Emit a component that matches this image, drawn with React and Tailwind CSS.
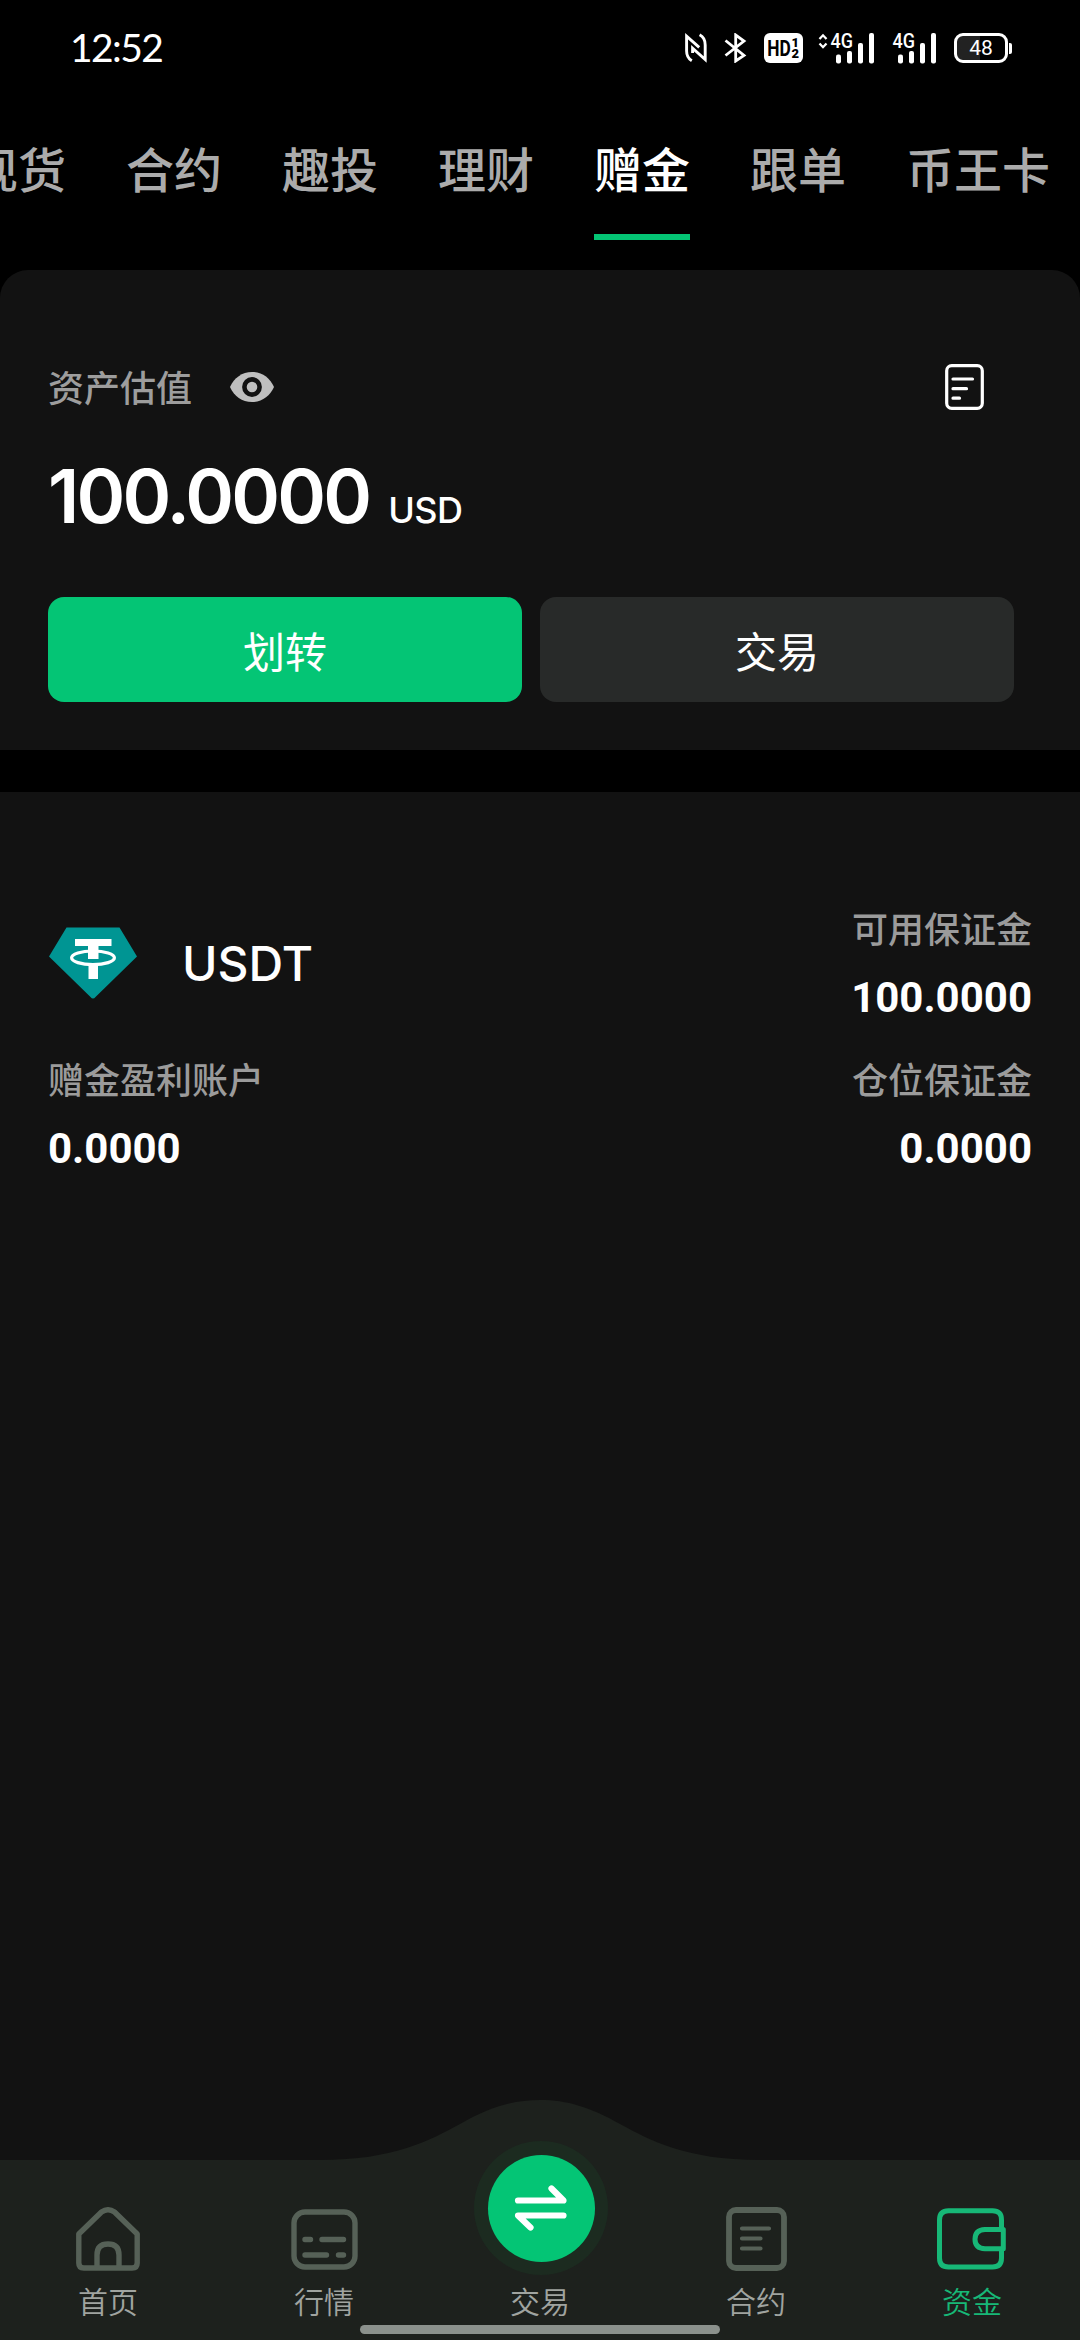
const CJK = "font-['Noto_Sans_CJK_SC',sans-serif]";

const tabs = ["现货", "合约", "趣投", "理财", "赠金", "跟单", "币王卡"];

function NfcIcon() {
  return (
    <svg width="22" height="30" viewBox="0 0 22 30" fill="none" stroke="#fff" strokeWidth="2.9">
      <path d="M6.8 27.8C3 25.5 1.6 22.5 1.6 18V3.2L14.2 14.4" />
      <path d="M14.6 1.8C18.8 4 20.2 7 20.2 12V26.6L7.6 15.2V20" />
    </svg>
  );
}

function BluetoothIcon() {
  return (
    <svg width="23" height="30" viewBox="0 0 23 30" fill="none" stroke="#fff" strokeWidth="2.8">
      <path d="M1.5 7.5L20 22.3L11.7 28V2L20 8L1.5 22.5" />
    </svg>
  );
}

function HdBadge() {
  return (
    <div className="flex h-[30px] w-[39px] items-center justify-center rounded-[6px] bg-white text-black">
      <svg width="39" height="30" viewBox="0 0 39 30" fill="#000" fontFamily="Roboto, sans-serif">
        <text x="3.2" y="23" fontSize="22.5" fontWeight="700" textLength="23.5" lengthAdjust="spacingAndGlyphs">HD</text>
        <text x="27.6" y="14" fontSize="13" fontWeight="900">1</text>
        <text x="27.6" y="25" fontSize="13" fontWeight="900">2</text>
      </svg>
    </div>
  );
}

function Signal({ arrows }) {
  return (
    <svg width="57" height="43" viewBox="0 -6 57 43" fill="#fff">
      {arrows && (
        <path d="M1.5 6L5 2.3L8.5 6M1.5 10.5L5 14.2L8.5 10.5" fill="none" stroke="#fff" strokeWidth="2.3" />
      )}
      <text x="12.5" y="14.7" fontFamily="Roboto, sans-serif" fontSize="19.5" fontWeight="500" textLength="22.5" lengthAdjust="spacingAndGlyphs">
        4G
      </text>
      <rect x="18" y="21.5" width="5" height="9" rx="2" />
      <rect x="29" y="18" width="5" height="12.5" rx="2" />
      <rect x="40" y="10" width="5" height="20.5" rx="2" />
      <rect x="51" y="0" width="5" height="30.5" rx="2" />
    </svg>
  );
}

function Battery() {
  return (
    <div className="flex items-center gap-px">
      <div className="flex h-[30px] w-[54px] items-center justify-center rounded-[9px] border-[3px] border-white bg-linear-to-r from-[#222] from-48% to-black to-48% font-['Roboto',sans-serif] text-[21px] leading-[24px] text-white">
        48
      </div>
      <div className="h-[11px] w-[3px] rounded-r-[2px] bg-white" />
    </div>
  );
}

function StatusBar() {
  return (
    <div className="flex h-24 items-center pr-[68px] pl-[70px]">
      <span className="-mt-[3px] font-['Lato',sans-serif] text-[39px] leading-[48px] tracking-[-1.6px] text-white">12:52</span>
      <div className="ml-auto flex items-center">
        <NfcIcon />
        <div className="ml-[17px]"><BluetoothIcon /></div>
        <div className="ml-[17px]"><HdBadge /></div>
        <div className="ml-[15px]"><Signal arrows /></div>
        <div className="ml-[5px]"><Signal /></div>
        <div className="ml-[17px]"><Battery /></div>
      </div>
    </div>
  );
}

function Tabs() {
  return (
    <div className="flex h-[174px] gap-[60px] overflow-hidden text-[48px] font-medium whitespace-nowrap">
      {tabs.map((t, i) => (
        <div
          key={t}
          className={
            (i === 0 ? "-ml-[30px] " : "") +
            "flex h-[144px] shrink-0 flex-col justify-between border-b-[6px] pt-[47px] leading-[48px] " +
            (t === "赠金" ? "border-[#04c575] text-white" : "border-transparent text-[#ababab]")
          }
        >
          {t}
        </div>
      ))}
    </div>
  );
}

function EyeIcon() {
  return (
    <svg width="44" height="30" viewBox="0 0 44 30">
      <path d="M22 0C32 0 40 6 44 15C40 24 32 30 22 30S4 24 0 15C4 6 12 0 22 0Z" fill="#bfbfbf" />
      <circle cx="22" cy="15" r="7.6" fill="#bfbfbf" stroke="#121212" strokeWidth="4.6" />
    </svg>
  );
}

function RecordIcon() {
  return (
    <svg width="39" height="46" viewBox="0 0 39 46" fill="none" stroke="#fff" strokeWidth="3.2" strokeLinecap="round">
      <rect x="1.7" y="1.7" width="35.6" height="42.6" rx="5" />
      <path d="M8 15H27.5M8 24.7H21.5M8 34.2H14.5" />
    </svg>
  );
}

function Overview() {
  return (
    <section className="h-[480px] rounded-t-[28px] bg-[#121212] pt-[92px] pr-[66px] pl-12">
      <div className="flex h-[50px] items-center">
        <span className="-mt-[3px] text-[36px] leading-[50px] font-medium text-[#9d9d9d]">资产估值</span>
        <div className="ml-[38px]"><EyeIcon /></div>
        <div className="mr-[30px] ml-auto"><RecordIcon /></div>
      </div>
      <div className="mt-[36px] flex h-[97px] items-baseline font-['Inter',sans-serif] text-white">
        <span className="text-[74px] leading-[96px] font-semibold tracking-[-2.8px]">100.0000</span>
        <span className="ml-[19px] text-[36px] font-medium tracking-[-0.6px]">USD</span>
      </div>
      <div className="mt-[52px] flex gap-[18px] text-[42px] leading-[104px] text-white">
        <button className="h-[105px] flex-1 rounded-[16px] bg-[#04c575]">划转</button>
        <button className="h-[105px] flex-1 rounded-[16px] bg-[#282a29]">交易</button>
      </div>
    </section>
  );
}

function TetherIcon() {
  return (
    <svg width="88" height="72" viewBox="0 0 88 72">
      <path d="M17.5 0.5H70.5L88 29.5L46.5 70Q44 73 41.5 70L0 29.5Z" fill="#009593" />
      <path d="M26 12H62.5V19H49.5V32H39V19H26Z" fill="#fff" />
      <rect x="39.5" y="37" width="9.5" height="15" fill="#fff" />
      <ellipse cx="44" cy="30.8" rx="21.4" ry="6.8" fill="none" stroke="#fff" strokeWidth="3.2" />
    </svg>
  );
}

function Stat({ label, value, right }) {
  return (
    <div className={right ? "text-right" : ""}>
      <div className="text-[36px] leading-[50px] font-[450] text-[#9b9b9b]">{label}</div>
      <div className="mt-[21px] font-['Roboto',sans-serif] text-[42px] leading-[50px] font-bold text-white">{value}</div>
    </div>
  );
}

function Holdings() {
  return (
    <section className="flex grow flex-col bg-[#121212] px-12 pt-[110px]">
      <div className="flex h-[151px] items-start justify-between">
        <div className="flex items-center pt-[24px] pl-px">
          <TetherIcon />
          <span className="mt-[2px] ml-[45px] font-['Inter',sans-serif] text-[48px] leading-[72px] font-medium text-white">USDT</span>
        </div>
        <Stat label="可用保证金" value="100.0000" right />
      </div>
      <div className="flex items-start justify-between">
        <Stat label="赠金盈利账户" value="0.0000" />
        <Stat label="仓位保证金" value="0.0000" right />
      </div>
    </section>
  );
}

function HomeIcon() {
  return (
    <svg width="64" height="64" viewBox="0 0 64 64" fill="none" stroke="#566157" strokeWidth="5.4" strokeLinejoin="round">
      <path d="M2.8 27L25.5 5Q32 0.5 38.5 5L61.2 27V56Q61.2 61 56.2 61H7.8Q2.8 61 2.8 56Z" />
      <path d="M21 60V48Q21 37 32 37T43 48V60" />
    </svg>
  );
}

function MarketIcon() {
  return (
    <svg width="67" height="61" viewBox="0 0 67 61" fill="none" stroke="#566157" strokeWidth="5.4" strokeLinecap="round">
      <rect x="3" y="3" width="61" height="55" rx="11" />
      <path d="M14 30.5H19.5M31 30.5H52.5M14 46H35.5M47.5 46H52.5" />
    </svg>
  );
}

function ContractIcon() {
  return (
    <svg width="61" height="64" viewBox="0 0 61 64" fill="none" stroke="#566157" strokeWidth="5.8">
      <rect x="3" y="3" width="55" height="58" rx="7" />
      <path d="M16 21.5H43M16 31.5H34.5M16 41.5H34.5" strokeWidth="4.2" strokeLinecap="round" />
    </svg>
  );
}

function WalletIcon() {
  return (
    <svg width="70" height="62" viewBox="0 0 70 62" fill="none" stroke="#17b877" strokeWidth="5">
      <path d="M64.5 20V12Q64.5 2.8 55.5 2.8H11.5Q2.5 2.8 2.5 12V50Q2.5 59 11.5 59H55.5Q64.5 59 64.5 50V42" />
      <path d="M66.3 21.5H48Q38 22 38 31.2T48 40.7H66.3Z" strokeLinejoin="round" />
    </svg>
  );
}

function NavItem({ icon, label, active }) {
  return (
    <div className="flex w-[216px] flex-col items-center">
      <div className="flex h-[118px] items-end pb-[7px]">
        <div className="flex h-[64px] items-center">{icon}</div>
      </div>
      <span className={"text-[30px] leading-[44px] font-[350] " + (active ? "text-[#17b877]" : "text-[#a0a4a0]")}>{label}</span>
    </div>
  );
}

function TradeButton() {
  return (
    <div className="flex w-[216px] flex-col items-center">
      <div className="relative z-10 -mt-[19px] ml-[2px] flex size-[134px] items-center justify-center rounded-full bg-[#1c2b20]">
        <div className="flex size-[107px] items-center justify-center rounded-full bg-[#04c575]">
          <svg width="54" height="46" viewBox="0 0 54 46" fill="none" stroke="#fff" strokeWidth="6.2" strokeLinecap="round" strokeLinejoin="round">
            <path d="M4 15.5H49.5L37.5 3.5" />
            <path d="M49.5 30.5H4L16.5 42.5" />
          </svg>
        </div>
      </div>
      <span className="mt-[3px] text-[30px] leading-[44px] font-[350] text-[#a0a4a0]">交易</span>
    </div>
  );
}

function BottomNav() {
  return (
    <nav className="relative h-[180px] shrink-0 bg-[#1d211d]">
      <svg className="absolute -top-[60px] left-[320px]" width="440" height="61" viewBox="320 2100 440 61">
        <path d="M320 2161V2160C395 2160 430 2140 460 2124C490 2107 513 2100 540 2100S590 2107 620 2124C650 2140 685 2160 760 2160V2161Z" fill="#1d211d" />
      </svg>
      <div className="flex">
        <NavItem icon={<HomeIcon />} label="首页" />
        <NavItem icon={<MarketIcon />} label="行情" />
        <TradeButton />
        <NavItem icon={<ContractIcon />} label="合约" />
        <NavItem icon={<WalletIcon />} label="资金" active />
      </div>
      <div className="absolute bottom-[6px] left-[360px] h-[9px] w-[360px] rounded-full bg-[#8b918c]" />
    </nav>
  );
}

export default function App() {
  return (
    <div className={"flex h-[2340px] w-[1080px] flex-col overflow-hidden bg-black " + CJK}>
      <StatusBar />
      <Tabs />
      <Overview />
      <div className="h-[42px] shrink-0" />
      <Holdings />
      <BottomNav />
    </div>
  );
}
